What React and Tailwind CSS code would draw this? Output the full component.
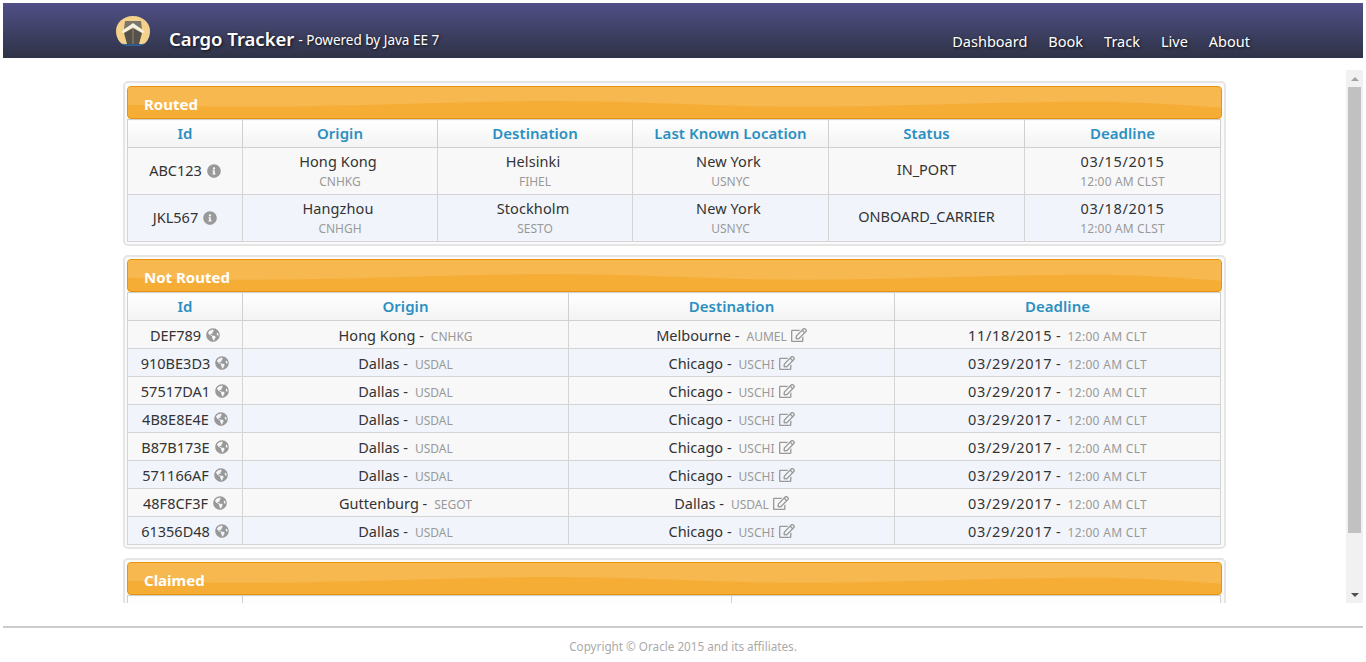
import { FaInfoCircle, FaGlobeAmericas, FaRegEdit } from "react-icons/fa";

const routed = [
  ["ABC123", "Hong Kong", "CNHKG", "Helsinki", "FIHEL", "New York", "USNYC", "IN_PORT", "03/15/2015"],
  ["JKL567", "Hangzhou", "CNHGH", "Stockholm", "SESTO", "New York", "USNYC", "ONBOARD_CARRIER", "03/18/2015"],
];

const notRouted = [
  ["DEF789", "Hong Kong", "CNHKG", "Melbourne", "AUMEL", "11/18/2015"],
  ["910BE3D3", "Dallas", "USDAL", "Chicago", "USCHI", "03/29/2017"],
  ["57517DA1", "Dallas", "USDAL", "Chicago", "USCHI", "03/29/2017"],
  ["4B8E8E4E", "Dallas", "USDAL", "Chicago", "USCHI", "03/29/2017"],
  ["B87B173E", "Dallas", "USDAL", "Chicago", "USCHI", "03/29/2017"],
  ["571166AF", "Dallas", "USDAL", "Chicago", "USCHI", "03/29/2017"],
  ["48F8CF3F", "Guttenburg", "SEGOT", "Dallas", "USDAL", "03/29/2017"],
  ["61356D48", "Dallas", "USDAL", "Chicago", "USCHI", "03/29/2017"],
];

const Logo = () => (
  <svg width="34" height="30" viewBox="0 0 34 30" className="shrink-0">
    <path d="M6 28C2 25 0 20 0 15C0 7 7 0 17 0s17 7 17 15c0 5-2 10-6 13z" fill="#f5d28c" />
    <path d="M8 13L9 5h16l1 8-9-5z" fill="#7c7668" />
    <path d="M5 16L17 7l12 9-3 1-9-6-9 6z" fill="#f4f1e6" />
    <path d="M8 17l9-5 9 5-3 11H11z" fill="#56524a" />
    <path d="M16.500 12h1v16h-1z" fill="#8a8578" />
    <path d="M6 28q5 2 11 1 6 1 11-1" stroke="#2f7fc4" strokeWidth="1" fill="none" />
  </svg>
);

const Wave = () => (
  <svg viewBox="0 0 1095 33" preserveAspectRatio="none" className="absolute inset-0 h-full w-full">
    <path d="M0 0H1095V22C1030 17 990 15 925 16C840 17 760 21 676 21C590 21 510 15 427 15C320 15 230 21 100 21C60 21 30 20 0 19Z" fill="#f7b850" />
  </svg>
);

const Panel = ({ title, first, children }) => (
  <section className={`w-[1103px] shrink-0 rounded-[5px] border-2 border-[#e5e5e5] bg-[#fafafa] px-0.5 pb-0.5 ${first ? "pt-[3px]" : "pt-0.5"}`}>
    <h2 className="relative h-[33px] overflow-hidden rounded-[4px] border border-[#e8930c] bg-[#f6ad36]">
      <Wave />
      <span className="relative block pl-4 pt-[7px] text-[15px] font-bold leading-5 text-white">{title}</span>
    </h2>
    {children}
  </section>
);

const Th = ({ children }) => (
  <th className="h-7 border border-[#d0d0d0] bg-gradient-to-b from-white to-[#f3f3f3] p-0 text-center text-[15px] font-semibold tracking-[0.05px] text-[#2b8fc1]">
    {children}
  </th>
);

const Td = ({ children }) => (
  <td className="border border-[#d4d4d4] p-0 text-center align-middle">{children}</td>
);

const Stacked = ({ main, sub }) => (
  <div className="flex flex-col items-center">
    <span className="pr-1 text-[14.500px] leading-[22px] tracking-[0.1px] text-[#333]">{main}</span>
    <span className="text-[12px] leading-5 text-[#999]">{sub}</span>
  </div>
);

const Deadline = ({ date, time }) => (
  <div className="flex flex-col items-center">
    <span className="text-[14.500px] leading-[22px] tracking-[0.7px] text-[#333]">{date}</span>
    <span className="text-[12px] leading-5 tracking-[0.15px] text-[#999]">{time}</span>
  </div>
);

const Inline = ({ main, sub, icon }) => (
  <span className="inline-flex items-baseline justify-center text-[14.500px] text-[#333]">
    {main} -<span className="ml-[7px] text-[12px] text-[#999]">{sub}</span>
    {icon && <FaRegEdit className="ml-1 self-center text-[16px] text-[#999]" />}
  </span>
);

const InlineDeadline = ({ date, time }) => (
  <span className="inline-flex items-baseline justify-center text-[14.500px] text-[#333]">
    <span className="tracking-[0.7px]">{date}</span>&nbsp;-
    <span className="ml-[7px] text-[12px] tracking-[0.3px] text-[#999]">{time}</span>
  </span>
);

const IdCell = ({ id, Icon }) => (
  <span className="inline-flex items-center justify-center gap-[5px] text-[14.500px] text-[#333]">
    {id}
    <Icon className="text-[14px] text-[#999]" />
  </span>
);

export default function App() {
  return (
    <div className="flex h-[662px] flex-col overflow-hidden bg-white px-[3px] pt-[3px] font-['Noto_Sans',sans-serif]">
      <header className="flex h-[55px] shrink-0 items-end justify-between bg-gradient-to-b from-[#504f88] to-[#2f3346] pb-[5px] pl-[113px] pr-[113px] text-white [text-shadow:1px_1px_3px_#111]">
        <div className="flex items-end">
          <div className="mb-[7px]">
            <Logo />
          </div>
          <span className="ml-[19px] text-[18.500px] font-semibold leading-7">Cargo Tracker</span>
          <span className="mb-[1px] ml-[4px] text-[13.500px] leading-6">- Powered by Java EE 7</span>
        </div>
        <nav className="flex gap-[21px] text-[14.500px] leading-6">
          <a>Dashboard</a>
          <a>Book</a>
          <a>Track</a>
          <a>Live</a>
          <a>About</a>
        </nav>
      </header>

      <div className="mt-3 flex h-[533px] shrink-0 overflow-hidden">
        <main className="flex flex-1 flex-col items-start gap-[9px] overflow-hidden pl-[120px] pt-[11px]">
          <Panel title="Routed" first>
            <table className="w-[1094px] table-fixed border-collapse">
              <colgroup>
                <col className="w-[115px]" />
                <col className="w-[195px]" />
                <col className="w-[195px]" />
                <col className="w-[196px]" />
                <col className="w-[196px]" />
                <col />
              </colgroup>
              <thead>
                <tr>
                  <Th>Id</Th>
                  <Th>Origin</Th>
                  <Th>Destination</Th>
                  <Th>Last Known Location</Th>
                  <Th>Status</Th>
                  <Th>Deadline</Th>
                </tr>
              </thead>
              <tbody>
                {routed.map((r, i) => (
                  <tr key={r[0]} className={`h-[47px] ${i % 2 ? "bg-[#f1f5fb]" : "bg-[#f8f8f8]"}`}>
                    <Td><div className="pb-0.5"><IdCell id={r[0]} Icon={FaInfoCircle} /></div></Td>
                    <Td><Stacked main={r[1]} sub={r[2]} /></Td>
                    <Td><Stacked main={r[3]} sub={r[4]} /></Td>
                    <Td><Stacked main={r[5]} sub={r[6]} /></Td>
                    <Td><div className="pb-0.5 text-[14.500px] text-[#333]">{r[7]}</div></Td>
                    <Td><Deadline date={r[8]} time="12:00 AM CLST" /></Td>
                  </tr>
                ))}
              </tbody>
            </table>
          </Panel>

          <Panel title="Not Routed">
            <table className="w-[1094px] table-fixed border-collapse">
              <colgroup>
                <col className="w-[115px]" />
                <col className="w-[326px]" />
                <col className="w-[326px]" />
                <col />
              </colgroup>
              <thead>
                <tr>
                  <Th>Id</Th>
                  <Th>Origin</Th>
                  <Th>Destination</Th>
                  <Th>Deadline</Th>
                </tr>
              </thead>
              <tbody>
                {notRouted.map((r, i) => (
                  <tr key={r[0]} className={`h-7 ${i % 2 ? "bg-[#f1f5fb]" : "bg-[#f8f8f8]"}`}>
                    <Td><IdCell id={r[0]} Icon={FaGlobeAmericas} /></Td>
                    <Td><Inline main={r[1]} sub={r[2]} /></Td>
                    <Td><Inline main={r[3]} sub={r[4]} icon /></Td>
                    <Td><InlineDeadline date={r[5]} time="12:00 AM CLT" /></Td>
                  </tr>
                ))}
              </tbody>
            </table>
          </Panel>

          <Panel title="Claimed">
            <table className="w-[1094px] table-fixed border-collapse">
              <colgroup>
                <col className="w-[115px]" />
                <col className="w-[489px]" />
                <col />
              </colgroup>
              <thead>
                <tr>
                  <Th></Th>
                  <Th></Th>
                  <Th></Th>
                </tr>
              </thead>
            </table>
          </Panel>
        </main>

        <div className="flex w-[17px] shrink-0 flex-col items-center bg-[#f1f1f1]">
          <div className="flex h-[17px] items-center justify-center">
            <div className="h-0 w-0 border-x-[4px] border-b-[4px] border-x-transparent border-b-[#a3a3a3]" />
          </div>
          <div className="h-[446px] w-[13px] bg-[#c1c1c1]" />
          <div className="mt-auto flex h-[17px] items-center justify-center">
            <div className="h-0 w-0 border-x-[4px] border-t-[4px] border-x-transparent border-t-[#505050]" />
          </div>
        </div>
      </div>

      <hr className="mt-[23px] h-0.5 shrink-0 border-0 bg-[#cccccc]" />
      <footer className="mt-[10px] text-center text-[11.700px] leading-4 text-[#aaa]">
        Copyright © Oracle 2015 and its affiliates.
      </footer>
    </div>
  );
}
